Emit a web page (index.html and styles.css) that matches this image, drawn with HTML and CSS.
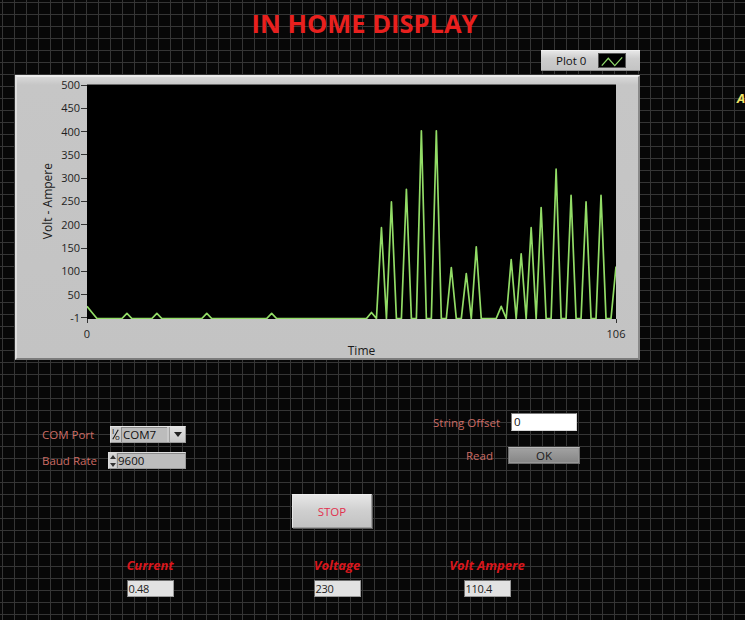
FILE: index.html
```html
<!DOCTYPE html>
<html lang="en">
<head>
<meta charset="utf-8">
<title>In Home Display</title>
<link rel="stylesheet" href="styles.css">
</head>
<body>
<main class="front-panel">
  <h1 class="title">IN HOME DISPLAY</h1>

  <div class="legend-row">
    <div class="legend">
      <span class="legend-name">Plot 0</span>
      <span class="legend-swatch">
        <svg viewBox="0 0 28 15" width="28" height="15"><polyline points="3,12 10,4 17,12 25,3" fill="none" stroke="#8fd86a" stroke-width="1.3"/></svg>
      </span>
    </div>
  </div>

  <section class="graph">
    <div class="y-axis">
      <span class="y-title">Volt - Ampere</span>
      <ul class="y-ticks">
        <li>500</li><li>450</li><li>400</li><li>350</li><li>300</li><li>250</li><li>200</li><li>150</li><li>100</li><li>50</li><li>-1</li>
      </ul>
    </div>
    <div class="plot">
      <svg viewBox="0 -500 106 502" preserveAspectRatio="none" width="529" height="235">
        <polyline class="trace" points="0,-25 1,-12 2,1 7,1 8,-10 9,1 13,1 14,-10 15,1 23,1 24,-10 25,1 36,1 37,-10 38,1 56,1 57,-12 58,1 59,-193 60,1 61,-248 62,1 63,1 64,-275 65,1 66,1 67,-400 68,1 69,1 70,-400 71,1 72,1 73,-108 74,1 75,1 76,-95 77,1 78,-152 79,1 82,1 83,-25 84,1 85,-125 86,1 87,-137 88,1 89,-193 90,1 91,-236 92,1 93,1 94,-318 95,1 96,1 97,-262 98,1 99,1 100,-248 101,1 102,1 103,-262 104,1 105,1 106,-110"/>
      </svg>
    </div>
    <div class="x-axis">
      <div class="x-ticks"><span class="x-tick">0</span><span class="x-tick">106</span></div>
      <div class="x-title">Time</div>
    </div>
  </section>

  <section class="controls">
    <div class="serial">
      <span class="ctl-label">COM Port</span>
      <div class="ring">
        <span class="io-icon"><span class="io-i">I</span><span class="io-o">o</span></span>
        <span class="ring-value">COM7</span>
        <span class="ring-btn"><svg viewBox="0 0 8 5" width="8" height="5"><polygon points="0,0 8,0 4,5" fill="#222"/></svg></span>
      </div>
      <span class="ctl-label">Baud Rate</span>
      <div class="numeric">
        <span class="inc-dec">
          <svg viewBox="0 0 6 14" width="6" height="14"><polygon points="3,1 6,5 0,5" fill="#333"/><polygon points="0,9 6,9 3,13" fill="#333"/></svg>
        </span>
        <span class="num-value">9600</span>
      </div>
    </div>

    <div class="reader">
      <span class="ctl-label right">String Offset</span>
      <span class="text-input">0</span>
      <span class="ctl-label right read-label">Read</span>
      <span class="ok-btn">OK</span>
    </div>
  </section>

  <div class="stop-row">
    <span class="stop-btn">STOP</span>
  </div>

  <section class="indicators">
    <div class="indicator ind-current">
      <span class="ind-label">Current</span>
      <span class="ind-box">0.48</span>
    </div>
    <div class="indicator ind-voltage">
      <span class="ind-label">Voltage</span>
      <span class="ind-box">230</span>
    </div>
    <div class="indicator ind-va">
      <span class="ind-label">Volt Ampere</span>
      <span class="ind-box">110.4</span>
    </div>
  </section>

  <span class="edge-label">A</span>
</main>
</body>
</html>
```

FILE: styles.css
```css
* {
  box-sizing: border-box;
}

html, body {
  margin: 0;
  padding: 0;
  background: #070707;
}

.front-panel {
  position: relative;
  width: 745px;
  height: 620px;
  overflow: hidden;
  font-family: "Open Sans", "DejaVu Sans", sans-serif;
  background-color: #070707;
  background-image:
    linear-gradient(to right, #353535 1px, transparent 1px),
    linear-gradient(to bottom, #353535 1px, transparent 1px);
  background-size: 12px 12px;
  background-position: 2px 2px;
}

.title {
  margin: 8px 0 0;
  padding-right: 16px;
  text-align: center;
  font-size: 25.5px;
  line-height: 30px;
  font-weight: 700;
  color: #e8201e;
}

/* legend */
.legend-row {
  display: flex;
  justify-content: flex-end;
  margin-top: 12px;
  padding-right: 105px;
}

.legend {
  width: 99px;
  height: 21px;
  display: flex;
  align-items: center;
  justify-content: space-between;
  padding: 0 14px 0 15px;
  background: linear-gradient(to bottom, #e6e6e6, #cdcdcd 40%, #c4c4c4);
  border-top: 1px solid #f2f2f2;
  border-bottom: 1px solid #8e8e8e;
}

.legend-name {
  font-size: 11.5px;
  color: #111;
}

.legend-swatch {
  display: flex;
  width: 28px;
  height: 15px;
  background: #000;
  border: 1px solid #555;
}

/* graph */
.graph {
  margin: 4px 0 0 15px;
  width: 625px;
  height: 285px;
  display: grid;
  grid-template-columns: 70px 529px 22px;
  grid-template-rows: 7px 235px 39px;
  background: linear-gradient(to bottom, #d8d8d8 0, #c6c6c6 8px, #c3c3c3 100%);
  border-style: solid;
  border-width: 2px;
  border-color: #ececec #8a8a8a #7c7c7c #dedede;
}

.y-axis {
  grid-column: 1;
  grid-row: 2;
  display: flex;
  justify-content: flex-end;
  align-items: flex-start;
  gap: 4px;
}

.y-title {
  align-self: center;
  writing-mode: vertical-rl;
  transform: rotate(180deg);
  font-size: 12px;
  line-height: 14px;
  color: #1a1a1a;
}

.y-ticks {
  list-style: none;
  margin: -5px 0 0;
  padding: 0;
  width: 28px;
  height: 245px;
  display: flex;
  flex-direction: column;
  justify-content: space-between;
}

.y-ticks li {
  display: flex;
  align-items: center;
  justify-content: flex-end;
  font-size: 11px;
  line-height: 12px;
  color: #1e1e1e;
}

.y-ticks li::after {
  content: "";
  width: 6px;
  height: 1px;
  margin-left: 1px;
  background: #333;
}

.plot {
  grid-column: 2;
  grid-row: 2;
  background: #000;
  border-top: 1px solid #6a6a6a;
}

.plot svg {
  display: block;
  margin-top: -1px;
}

.trace {
  fill: none;
  stroke: #92dc66;
  stroke-width: 1.7;
  vector-effect: non-scaling-stroke;
  stroke-linejoin: round;
}

.x-axis {
  grid-column: 2;
  grid-row: 3;
}

.x-ticks {
  display: flex;
  justify-content: space-between;
  margin: 0 -10px;
}

.x-tick {
  width: 20px;
  display: flex;
  flex-direction: column;
  align-items: center;
  font-size: 11px;
  line-height: 12px;
  color: #1e1e1e;
}

.x-tick::before {
  content: "";
  width: 1px;
  height: 4px;
  margin-bottom: 5px;
  background: #333;
}

.x-title {
  margin-top: 4px;
  padding-left: 20px;
  text-align: center;
  font-size: 12px;
  line-height: 14px;
  color: #1a1a1a;
}

/* controls */
.controls {
  display: flex;
  align-items: flex-start;
  margin-top: 53px;
}

.ctl-label {
  font-size: 11.5px;
  line-height: 17px;
  color: #cc6b64;
  white-space: nowrap;
}

.ctl-label.right {
  text-align: right;
}

.serial {
  margin: 13px 0 0 42px;
  display: grid;
  grid-template-columns: 66px 78px;
  row-gap: 9px;
  align-items: center;
}

.ring {
  display: flex;
  height: 17px;
  margin-left: 2px;
  background: #cacaca;
  border: 1px solid #9a9a9a;
  border-top-color: #e6e6e6;
  border-left-color: #e0e0e0;
}

.io-icon {
  position: relative;
  width: 10px;
  flex: none;
  font-size: 8px;
  line-height: 8px;
  color: #111;
}

.io-i {
  position: absolute;
  left: 1px;
  top: 0;
}

.io-o {
  position: absolute;
  left: 4px;
  top: 6px;
}

.io-icon::before {
  content: "";
  position: absolute;
  left: 4px;
  top: 2px;
  width: 1px;
  height: 11px;
  background: #111;
  transform: rotate(30deg);
}

.ring-value {
  width: 46px;
  background: #bcbcbc;
  border-top: 1px solid #8a8a8a;
  border-left: 1px solid #8a8a8a;
  font-size: 11.5px;
  line-height: 14px;
  padding-left: 1px;
  color: #111;
}

.ring-btn {
  flex: 1;
  display: flex;
  align-items: center;
  justify-content: center;
  margin-left: 2px;
  background: linear-gradient(to bottom, #e2e2e2, #c8c8c8);
  border-left: 1px solid #a0a0a0;
}

.numeric {
  display: flex;
  height: 17px;
  background: #c6c6c6;
  border: 1px solid #9a9a9a;
  border-top-color: #dedede;
  border-left-color: #dedede;
}

.inc-dec {
  width: 7px;
  flex: none;
  display: flex;
  align-items: center;
  justify-content: center;
  background: #d4d4d4;
}

.num-value {
  flex: 1;
  margin-left: 1px;
  background: #bdbdbd;
  border-top: 1px solid #8a8a8a;
  border-left: 1px solid #8a8a8a;
  font-size: 11.5px;
  line-height: 14px;
  color: #111;
}

.reader {
  margin-left: 247px;
  display: grid;
  grid-template-columns: 66px 72px;
  column-gap: 10px;
  row-gap: 16px;
  align-items: center;
}

.read-label {
  padding-right: 6px;
}

.text-input {
  margin-left: 2px;
  width: 66px;
  height: 18px;
  background: #fff;
  border: 1px solid #7a7a7a;
  border-bottom-color: #d8d8d8;
  border-right-color: #d8d8d8;
  font-size: 11.5px;
  line-height: 15px;
  padding-left: 2px;
  color: #111;
}

.ok-btn {
  margin-left: -1px;
  width: 72px;
  height: 17px;
  display: flex;
  align-items: center;
  justify-content: center;
  background: linear-gradient(to bottom, #a2a2a2, #858585);
  border: 1px solid #6e6e6e;
  border-top-color: #b8b8b8;
  box-shadow: inset 0 0 0 1px #989898;
  font-size: 11.5px;
  color: #1a1a1a;
}

/* stop */
.stop-row {
  margin-top: 25px;
  padding-left: 292px;
}

.stop-btn {
  display: flex;
  align-items: center;
  justify-content: center;
  width: 80px;
  height: 34px;
  background: linear-gradient(to bottom, #e6e6e6, #cfcfcf 50%, #c2c2c2);
  border: 1px solid #9c9c9c;
  border-top-color: #f0f0f0;
  border-left-color: #e6e6e6;
  box-shadow: 1px 1px 0 #5a5a5a;
  font-size: 11.5px;
  color: #e2304e;
}

/* indicators */
.indicators {
  display: flex;
  margin-top: 29px;
}

.indicator {
  width: 100px;
  display: flex;
  flex-direction: column;
  align-items: center;
}

.ind-current {
  margin-left: 100px;
}

.ind-voltage {
  margin-left: 87px;
}

.ind-va {
  margin-left: 50px;
}

.ind-label {
  font-size: 13px;
  line-height: 16px;
  font-weight: 700;
  font-style: italic;
  color: #d8161c;
  white-space: nowrap;
}

.ind-box {
  margin-top: 7px;
  width: 47px;
  height: 17px;
  background: #e2e2e2;
  border: 1px solid #9a9a9a;
  border-top-color: #6e6e6e;
  border-left-color: #6e6e6e;
  font-size: 11px;
  line-height: 15px;
  padding-left: 1px;
  color: #222;
  letter-spacing: -0.3px;
}

.edge-label {
  position: absolute;
  left: 737px;
  top: 90px;
  font-size: 13px;
  line-height: 16px;
  font-weight: 700;
  font-style: italic;
  color: #f0e468;
}
```
